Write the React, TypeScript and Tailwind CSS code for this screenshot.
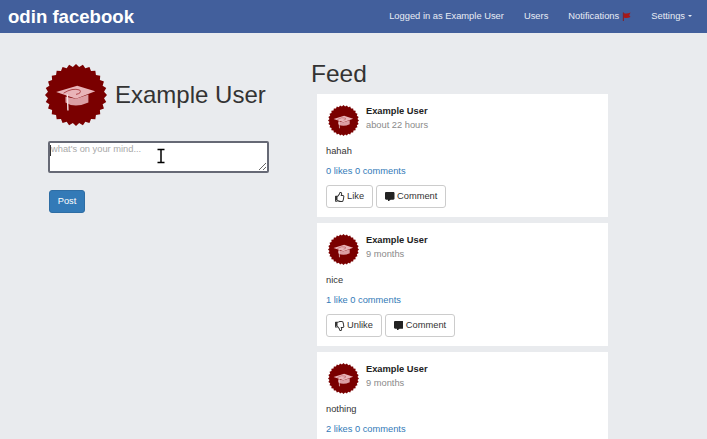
import { FaCommentAlt, FaRegThumbsDown, FaRegThumbsUp } from "react-icons/fa";

const POSTS = [
  { time: "about 22 hours", body: "hahah", likes: "0 likes", liked: false },
  { time: "9 months", body: "nice", likes: "1 like", liked: true },
  { time: "9 months", body: "nothing", likes: "2 likes", liked: false },
];

// scalloped badge outline
const sealPoints = Array.from({ length: 56 }, (_, i) => {
  const r = i % 2 === 0 ? 50 : 45.5;
  const a = (i / 56) * Math.PI * 2;
  return `${(50 + r * Math.cos(a)).toFixed(2)},${(50 + r * Math.sin(a)).toFixed(2)}`;
}).join(" ");

function Avatar({ className }: { className: string }) {
  return (
    <svg viewBox="0 0 100 100" className={className}>
      <polygon points={sealPoints} fill="#7a0000" />
      <path d="M18 45 L52 35 L81 44 L50 56 Z" fill="#e9b4b8" />
      <path d="M33 53 L33 62 Q48 72 70 62 L70 49 L50 56 Z" fill="#dc9ea3" />
      <path d="M30 47 Q44 38 56 42 Q60 47 50 49" stroke="#a83a40" strokeWidth="1.5" fill="none" />
      <path d="M36 49 L37 75" stroke="#f6e3e3" strokeWidth="2.2" fill="none" />
    </svg>
  );
}

function NavLink({ children }: { children: React.ReactNode }) {
  return <span className="flex items-center text-[#e8ecf5]">{children}</span>;
}

function PostCard({ post }: { post: (typeof POSTS)[number] }) {
  return (
    <div className="h-[123px] w-[291px] shrink-0 bg-white pl-[9px] pt-[11px]">
      <div className="flex items-start">
        <Avatar className="ml-[2px] h-[31px] w-[31px]" />
        <div className="ml-[7px]">
          <div className="text-[9.3px] leading-[13px] font-bold text-[#222]">Example User</div>
          <div className="mt-[0.5px] text-[9.3px] leading-[13px] text-[#8a8a8a]">{post.time}</div>
        </div>
      </div>
      <div className="mt-[9px] text-[9.3px] leading-[13px] text-[#333]">{post.body}</div>
      <div className="mt-[7px] text-[9.3px] leading-[13px] text-[#337ab7]">
        {post.likes} 0 comments
      </div>
      <div className="mt-[7px] flex gap-[3px]">
        <button className="flex h-[23px] items-center gap-[2px] rounded-[3px] border border-[#ccc] bg-white px-[8px] text-[9.3px] text-[#333]">
          {post.liked ? (
            <FaRegThumbsDown className="text-[10px]" />
          ) : (
            <FaRegThumbsUp className="text-[10px]" />
          )}
          {post.liked ? "Unlike" : "Like"}
        </button>
        <button className="flex h-[23px] items-center gap-[2.5px] rounded-[3px] border border-[#ccc] bg-white px-[8px] text-[9.3px] text-[#333]">
          <FaCommentAlt className="text-[9.5px] text-[#222]" />
          Comment
        </button>
      </div>
    </div>
  );
}

export default function App() {
  return (
    <div className="h-[439px] w-[707px] overflow-hidden bg-[#e9ebee] font-['Liberation_Sans',Arial,sans-serif]">
      {/* Navbar */}
      <nav className="flex h-[33px] items-center bg-[#425f9c] pl-[8px] text-[9.35px]">
        <span className="text-[18.6px] font-bold text-white">odin facebook</span>
        <div className="ml-auto flex items-center gap-[20px] pr-[15px]">
          <NavLink>Logged in as Example User</NavLink>
          <NavLink>Users</NavLink>
          <NavLink>
            Notifications
            <svg viewBox="0 0 10 10" className="ml-[3px] h-[9px] w-[9px]">
              <path d="M1.5 0.5 L1.5 10" stroke="#8c1414" strokeWidth="1" />
              <path d="M2 1 Q5 2.5 9.5 0.5 L8 3.5 L9.5 5.5 Q5 7.5 2 6 Z" fill="#a81818" />
            </svg>
          </NavLink>
          <NavLink>
            Settings
            <span className="ml-[3px] h-0 w-0 border-x-[2.5px] border-t-[2.5px] border-x-transparent border-t-[#e8ecf5]" />
          </NavLink>
        </div>
      </nav>

      <div className="flex pl-[45px]">
        {/* Left column */}
        <div className="w-[266px] shrink-0">
          <div className="mt-[31px] flex items-center">
            <Avatar className="h-[62px] w-[62px]" />
            <h1 className="ml-[8px] text-[24px] leading-none text-[#333]">Example User</h1>
          </div>
          <div className="relative ml-[3px] mt-[15px] h-[32px] w-[221px]">
            <textarea
              placeholder="what's on your mind..."
              className="block h-full w-full rounded-[2px] border-2 border-[#666975] bg-white px-[1px] text-[9.3px] leading-[13px] text-[#333] outline-none placeholder:text-[#a9a9a9]"
            />
            <span className="absolute left-[2px] top-[4px] h-[11px] w-px bg-[#333]" />
            <svg viewBox="0 0 10 16" className="absolute left-[108px] top-[7px] h-[16px] w-[10px]">
              <path d="M1.5 1.5 H8.5 M5 1.5 V14.5 M1.5 14.5 H8.5" stroke="#fff" strokeWidth="3.5" fill="none" />
              <path d="M1.5 1.5 H8.5 M5 1.5 V14.5 M1.5 14.5 H8.5" stroke="#000" strokeWidth="1.5" fill="none" />
            </svg>
          </div>
          <button className="ml-[4px] mt-[17px] block h-[23px] w-[36px] rounded-[3px] border border-[#2e6da4] bg-[#337ab7] text-[9.3px] text-white">
            Post
          </button>
        </div>

        {/* Feed */}
        <div className="flex-1">
          <h2 className="mt-[28px] text-[24.5px] leading-[26px] text-[#333]">Feed</h2>
          <div className="ml-[6px] mt-[7px] flex flex-col gap-[6px]">
            {POSTS.map((post, i) => (
              <PostCard key={i} post={post} />
            ))}
          </div>
        </div>
      </div>
    </div>
  );
}
